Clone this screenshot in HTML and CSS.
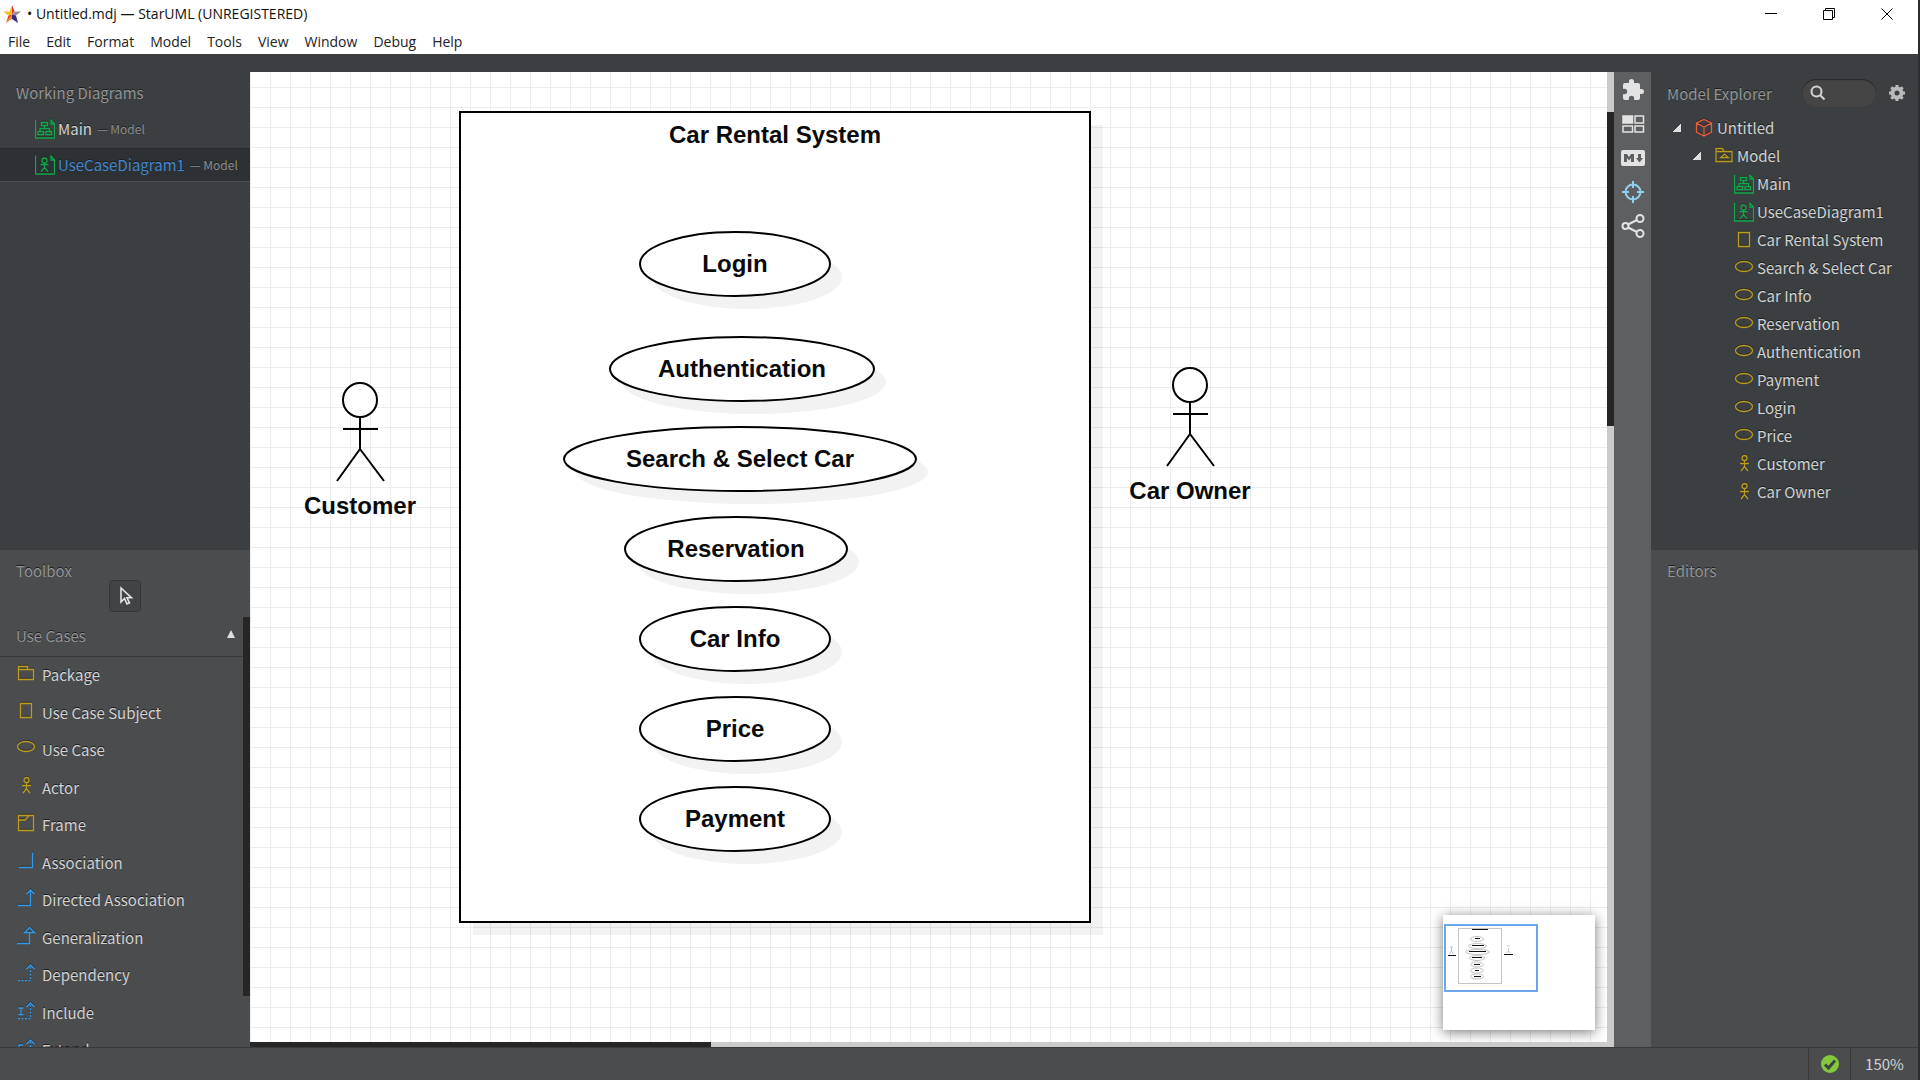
FILE: index.html
```html
<!DOCTYPE html>
<html lang="en">
<head>
<meta charset="utf-8">
<title>Untitled.mdj — StarUML</title>
<link rel="stylesheet" href="styles.css">
</head>
<body>
<svg class="defs" aria-hidden="true">
  <symbol id="i-class" viewBox="0 0 20 20"><path d="M.5.5v18.500h19V5M16 1v4h3.500zM6.500 3.500h6v3h-6zM9.500 6.500v3M5 13V9.500h9.500V13M3 12.500h5.500v3H3zM11 12.500h5.500v3H11z"/></symbol>
  <symbol id="i-usecase-diagram" viewBox="0 0 20 20"><path d="M.5.5v18.500h19V5M16 1v4h3.500zM9.500 8v4.500L6 16.500M9.500 12.500l3.500 4M5.500 9.500h8"/><circle cx="9.500" cy="5.500" r="2.500"/></symbol>
  <symbol id="i-cube" viewBox="0 0 20 20"><path d="M10 1.500l7.500 3.500v9L10 18l-7.500-4V5zM2.500 5L10 9l7.500-4M10 9v9"/></symbol>
  <symbol id="i-model" viewBox="0 0 20 20"><path d="M2 15.500V2.500h6.500l1.500 3h8v10zM2 5.500h8M6.500 11.500h8l-4-3.500z"/></symbol>
  <symbol id="i-package" viewBox="0 0 20 20"><path d="M2.500 16.500v-13h9v3h6v10zM2.500 6.500h9"/></symbol>
  <symbol id="i-rect" viewBox="0 0 20 20"><path d="M4.500 2.500h11v14h-11z"/></symbol>
  <symbol id="i-ellipse" viewBox="0 0 20 20"><ellipse cx="10" cy="8.500" rx="8.500" ry="5"/></symbol>
  <symbol id="i-actor" viewBox="0 0 20 20"><circle cx="10.500" cy="4" r="2.500"/><path d="M10.500 6.500v6L7 17M10.500 12.500L14 17M6 9.500h9"/></symbol>
  <symbol id="i-frame" viewBox="0 0 20 20"><path d="M2.500 2.500h15v15h-15zM2.500 7H9l4-4.500"/></symbol>
  <symbol id="i-assoc" viewBox="0 0 20 20"><path d="M3 16.500h13.500v-15"/></symbol>
  <symbol id="i-directed" viewBox="0 0 20 20"><path d="M2 17.500h12.500V2M10.500 6l4-4 4 4"/></symbol>
  <symbol id="i-general" viewBox="0 0 20 20"><path d="M1 17.500h12.500v-11M8.500 6.500h10l-5-5z"/></symbol>
  <symbol id="i-depend" viewBox="0 0 20 20"><path stroke-dasharray="2 1.500" d="M2 17.500h12.500V3"/><path d="M10.500 6l4-4 4 4"/></symbol>
  <symbol id="i-include" viewBox="0 0 20 20"><path stroke-dasharray="2 1.500" d="M2 17.500h12.500V3"/><path d="M10.500 6l4-4 4 4M2.500 7h5M2.500 13.500h5M5 7v6.500"/></symbol>
  <symbol id="i-extend" viewBox="0 0 20 20"><path stroke-dasharray="2 1.500" d="M2 17.500h12.500V3"/><path d="M10.500 6l4-4 4 4M7 7H3v6.500h4M3 10h3"/></symbol>
</svg>

<header class="titlebar">
  <svg class="logo" viewBox="0 0 18 18" aria-hidden="true">
    <path fill="#f6c21c" d="M9 0L6.500 6.500 0 6.500 5.500 10.500 9 9.500z"/>
    <path fill="#e23b2e" d="M9 0l2.500 6L9 9.500zM5.500 10.500L9 9.500 3 18z"/>
    <path fill="#9c8b93" d="M11.500 6.500H18l-5 4L9 9.500z"/>
    <path fill="#3b2a7c" d="M13 10.500L15 18l-6-4V9.500z"/>
    <path fill="#f08a1d" d="M3 18l6-4V9.500z"/>
  </svg>
  <h1 class="window-title">• Untitled.mdj — StarUML (UNREGISTERED)</h1>
  <div class="window-controls">
    <button type="button" aria-label="Minimize"><svg viewBox="0 0 12 12"><path d="M0 5.500h12"/></svg></button>
    <button type="button" aria-label="Restore"><svg viewBox="0 0 12 12"><path d="M.5 2.500h9v9h-9zM2.500 2.500V.5h9v9h-2"/></svg></button>
    <button type="button" aria-label="Close"><svg viewBox="0 0 12 12"><path d="M.5.5l11 11M11.500.5l-11 11"/></svg></button>
  </div>
</header>

<nav class="menubar">
  <button type="button">File</button><button type="button">Edit</button><button type="button">Format</button><button type="button">Model</button><button type="button">Tools</button><button type="button">View</button><button type="button">Window</button><button type="button">Debug</button><button type="button">Help</button>
</nav>

<div class="workspace">
  <aside class="sidebar left">
    <section class="panel upper">
      <h2 class="panel-title">Working Diagrams</h2>
      <ul class="diagrams">
        <li><svg class="icon green"><use href="#i-class"/></svg><span class="name">Main</span><span class="path">— Model</span></li>
        <li class="selected"><svg class="icon green"><use href="#i-usecase-diagram"/></svg><span class="name">UseCaseDiagram1</span><span class="path">— Model</span></li>
      </ul>
    </section>
    <section class="panel lower">
      <h2 class="panel-title">Toolbox</h2>
      <button type="button" class="select-tool" aria-label="Select"><svg viewBox="0 0 16 20"><path d="M4 2v14l3.500-3.500 2.500 5.500 2.500-1.200-2.500-5h4.500z"/></svg></button>
      <div class="tool-scroll">
        <div class="tool-group">
          <h3 class="group-title">Use Cases <span class="fold"></span></h3>
          <ul class="tools">
            <li><button type="button"><svg class="icon gold"><use href="#i-package"/></svg>Package</button></li>
            <li><button type="button"><svg class="icon gold"><use href="#i-rect"/></svg>Use Case Subject</button></li>
            <li><button type="button"><svg class="icon gold"><use href="#i-ellipse"/></svg>Use Case</button></li>
            <li><button type="button"><svg class="icon gold"><use href="#i-actor"/></svg>Actor</button></li>
            <li><button type="button"><svg class="icon gold"><use href="#i-frame"/></svg>Frame</button></li>
            <li><button type="button"><svg class="icon blue"><use href="#i-assoc"/></svg>Association</button></li>
            <li><button type="button"><svg class="icon blue"><use href="#i-directed"/></svg>Directed Association</button></li>
            <li><button type="button"><svg class="icon blue"><use href="#i-general"/></svg>Generalization</button></li>
            <li><button type="button"><svg class="icon blue"><use href="#i-depend"/></svg>Dependency</button></li>
            <li><button type="button"><svg class="icon blue"><use href="#i-include"/></svg>Include</button></li>
            <li><button type="button"><svg class="icon blue"><use href="#i-extend"/></svg>Extend</button></li>
          </ul>
        </div>
        <div class="track"><div class="thumb tools-thumb"></div></div>
      </div>
    </section>
  </aside>

  <main class="editor">
    <div class="canvas">
      <svg class="diagram" role="img" aria-label="Car rental use case diagram">
        <defs>
          <pattern id="grid" width="20" height="20" y="15" patternUnits="userSpaceOnUse"><path class="gridline" d="M.5 0v20M0 .5h20"/></pattern>
        </defs>
        <rect width="100%" height="100%" fill="url(#grid)"/>
        <rect class="shadow" x="223" y="53" width="630" height="810"/>
        <rect class="shape" x="210" y="40" width="630" height="810"/>
        <g class="shadow">
          <ellipse cx="497" cy="205" rx="95" ry="32"/><ellipse cx="504" cy="310" rx="132" ry="32"/><ellipse cx="502" cy="400" rx="176" ry="32"/><ellipse cx="498" cy="490" rx="111" ry="32"/><ellipse cx="497" cy="580" rx="95" ry="32"/><ellipse cx="497" cy="670" rx="95" ry="32"/><ellipse cx="497" cy="760" rx="95" ry="32"/>
        </g>
        <g class="shape">
          <ellipse cx="485" cy="192" rx="95" ry="32"/><ellipse cx="492" cy="297" rx="132" ry="32"/><ellipse cx="490" cy="387" rx="176" ry="32"/><ellipse cx="486" cy="477" rx="111" ry="32"/><ellipse cx="485" cy="567" rx="95" ry="32"/><ellipse cx="485" cy="657" rx="95" ry="32"/><ellipse cx="485" cy="747" rx="95" ry="32"/>
          <g id="person"><circle cx="110" cy="328" r="17"/><path fill="none" d="M110 345v32L87 409M110 377l24 32M93 357h35"/></g>
          <use href="#person" x="830" y="-15"/>
        </g>
        <g class="label">
          <text x="525" y="71">Car Rental System</text>
          <text x="485" y="200">Login</text><text x="492" y="305">Authentication</text><text x="490" y="395">Search &amp; Select Car</text><text x="486" y="485">Reservation</text><text x="485" y="575">Car Info</text><text x="485" y="665">Price</text><text x="485" y="755">Payment</text>
          <text x="110" y="442">Customer</text><text x="940" y="427">Car Owner</text>
        </g>
      </svg>
      <div class="minimap">
        <svg viewBox="0 0 152 115" aria-hidden="true">
          <rect x="2" y="10" width="92" height="66" fill="none" stroke="#6aa5ee" stroke-width="2"/>
          <g fill="none" stroke="#c4c4c4">
            <rect x="15.500" y="13.500" width="43" height="55"/>
            <ellipse cx="34" cy="24" rx="6.500" ry="2.500"/><ellipse cx="34.500" cy="31" rx="9" ry="2.500"/><ellipse cx="34.500" cy="37" rx="12" ry="2.500"/><ellipse cx="34" cy="43" rx="7.500" ry="2.500"/><ellipse cx="34" cy="49.500" rx="6.500" ry="2.500"/><ellipse cx="34" cy="55.500" rx="6.500" ry="2.500"/><ellipse cx="34" cy="61.500" rx="6.500" ry="2.500"/>
            <path d="M7 32l3 0M8.500 32v4l-2 3M8.500 36l2 3M64 31h3M65.500 33v3l-2 2M65.500 36l2 2"/>
          </g>
          <path fill="none" stroke="#111" d="M29 14.500h16M32 23.500h5M29 30.500h12M26 36.500h17M29 42.500h10M31 49.500h6M32 55.500h4M31 61.500h7M5 40.500h8M61 39.500h9"/>
        </svg>
      </div>
    </div>
    <div class="vtrack"><div class="thumb v-thumb"></div></div>
    <div class="htrack"><div class="thumb h-thumb"></div></div>
  </main>

  <nav class="rail">
    <button type="button" aria-label="Extensions"><svg viewBox="0 0 24 24" fill="#e3e3e3"><path d="M20.500 11H19V7a2 2 0 0 0-2-2h-4V3.500a2.500 2.500 0 0 0-5 0V5H4a2 2 0 0 0-2 2v3.800h1.500a2.700 2.700 0 0 1 0 5.400H2V20a2 2 0 0 0 2 2h3.800v-1.500a2.700 2.700 0 0 1 5.400 0V22H17a2 2 0 0 0 2-2v-4h1.500a2.500 2.500 0 0 0 0-5z"/></svg></button>
    <button type="button" aria-label="Thumbnails"><svg viewBox="0 0 24 24" fill="none" stroke="#e3e3e3" stroke-width="1.500"><path fill="#e3e3e3" d="M2 4h9.500v7H2z"/><path d="M14 4h8.500v7H14zM2 14h9.500v6H2zM14 14h8.500v6H14z"/></svg></button>
    <button type="button" aria-label="Markdown"><svg viewBox="0 0 24 24"><rect y="4" width="24" height="16" rx="2" fill="#e3e3e3"/><path fill="#5e5f61" d="M3 16V8h3l2 3 2-3h3v8h-3v-4l-2 2.500L6 12v4zM17 8h3v4h2l-3.500 4.500L15 12h2z"/></svg></button>
    <button type="button" aria-label="Locate"><svg viewBox="0 0 24 24" fill="none" stroke="#8fd0ee" stroke-width="2"><circle cx="12" cy="12" r="7.500"/><path d="M12 1v7M12 16v7M1 12h7M16 12h7"/></svg></button>
    <button type="button" aria-label="Share"><svg viewBox="0 0 24 24" fill="none" stroke="#e3e3e3" stroke-width="2"><circle cx="4.500" cy="12" r="3"/><circle cx="19" cy="4.500" r="3.500"/><circle cx="19" cy="19.500" r="3.500"/><path d="M7 10.500l9-4.500M7 13.500l9 4.500"/></svg></button>
  </nav>

  <aside class="sidebar right">
    <section class="panel upper">
      <div class="explorer-head">
        <h2 class="panel-title">Model Explorer</h2>
        <label class="search"><svg viewBox="0 0 16 16" aria-hidden="true"><circle cx="6.500" cy="6.500" r="5"/><path d="M10 10l4.500 4.500"/></svg><input type="text" aria-label="Search model"></label>
        <button type="button" class="gear" aria-label="Settings"><svg viewBox="0 0 16 16"><circle cx="8" cy="8" r="4.500" stroke-width="4" stroke="#b9babb" fill="none"/><path stroke="#b9babb" stroke-width="3" d="M8 0v3M8 13v3M0 8h3M13 8h3M2.300 2.300l2.200 2.200M11.500 11.500l2.200 2.200M13.700 2.300l-2.200 2.200M4.500 11.500l-2.200 2.200"/></svg></button>
      </div>
      <ul class="tree">
        <li><span class="arrow"></span><svg class="icon red"><use href="#i-cube"/></svg>Untitled</li>
        <li class="level1"><span class="arrow"></span><svg class="icon gold"><use href="#i-model"/></svg>Model</li>
        <li class="level2"><svg class="icon green"><use href="#i-class"/></svg>Main</li>
        <li class="level2"><svg class="icon green"><use href="#i-usecase-diagram"/></svg>UseCaseDiagram1</li>
        <li class="level2"><svg class="icon gold"><use href="#i-rect"/></svg>Car Rental System</li>
        <li class="level2"><svg class="icon gold"><use href="#i-ellipse"/></svg>Search &amp; Select Car</li>
        <li class="level2"><svg class="icon gold"><use href="#i-ellipse"/></svg>Car Info</li>
        <li class="level2"><svg class="icon gold"><use href="#i-ellipse"/></svg>Reservation</li>
        <li class="level2"><svg class="icon gold"><use href="#i-ellipse"/></svg>Authentication</li>
        <li class="level2"><svg class="icon gold"><use href="#i-ellipse"/></svg>Payment</li>
        <li class="level2"><svg class="icon gold"><use href="#i-ellipse"/></svg>Login</li>
        <li class="level2"><svg class="icon gold"><use href="#i-ellipse"/></svg>Price</li>
        <li class="level2"><svg class="icon gold"><use href="#i-actor"/></svg>Customer</li>
        <li class="level2"><svg class="icon gold"><use href="#i-actor"/></svg>Car Owner</li>
      </ul>
    </section>
    <section class="panel lower">
      <h2 class="panel-title">Editors</h2>
    </section>
  </aside>
</div>

<footer class="statusbar">
  <div class="status valid"><svg viewBox="0 0 18 18" role="img" aria-label="Valid"><circle cx="9" cy="9" r="9" fill="#84c93c"/><path fill="none" stroke="#3f4441" stroke-width="3" d="M4 9.500l3.500 3.500L14 5.500"/></svg></div>
  <div class="status zoom">150%</div>
</footer>
</body>
</html>
```
FILE: styles.css
```css
* { box-sizing: border-box; }

body {
  margin: 0;
  height: 100vh;
  border-right: 2px solid #2b2d2f;
  display: grid;
  grid-template-rows: 30px 24px minmax(0, 1fr) 33px;
  background: #3b3f41;
  color: #d2d3d3;
  font: 15px/20px "Noto Sans CJK SC", "Noto Sans", sans-serif;
  overflow: hidden;
}

h1, h2, h3, ul { margin: 0; padding: 0; font-size: inherit; font-weight: 400; list-style: none; }
button { border: 0; padding: 0; background: none; color: inherit; font: inherit; text-shadow: inherit; }
.defs { position: absolute; width: 0; height: 0; }

/* Title bar and menu */
.titlebar { display: flex; align-items: center; background: #fff; color: #111; padding: 0 2px 2px 3px; }
.logo { width: 18px; height: 18px; }
.window-title { margin-left: 6px; font: 14px/20px "Open Sans", sans-serif; }
.window-controls { margin-left: auto; display: flex; }
.window-controls button { width: 58px; height: 28px; display: grid; place-items: center; }
.window-controls svg { width: 12px; height: 12px; fill: none; stroke: #000; }
.menubar { display: flex; gap: 16px; align-items: center; padding: 0 8px; background: #fff; color: #222; font: 14px/20px "Open Sans", sans-serif; }

/* Workspace */
.workspace { display: grid; grid-template-columns: 250px minmax(0, 1fr) 37px 267px; padding-top: 18px; min-height: 0; }
.sidebar { display: grid; grid-template-rows: minmax(0, 49fr) minmax(0, 51fr); text-shadow: 0 -1px 0 #1c1e1f; min-height: 0; }
.lower { background: #4b4c4e; overflow: hidden; }
.panel-title { height: 41px; padding: 11px 16px 10px; line-height: 20px; color: #929495; }
.icon { width: 20px; height: 20px; flex: none; fill: none; stroke-width: 1.3; filter: drop-shadow(0 -1px 0 #22221c99); }
.green { stroke: #0fa84a; }
.gold { stroke: #bd9c1c; }
.blue { stroke: #3399ea; }
.red { stroke: #ee5c3e; }

.diagrams { display: grid; gap: 4px; }
.diagrams li { height: 32px; display: flex; align-items: center; padding-left: 35px; white-space: nowrap; }
.diagrams .name { margin-left: 3px; }
.diagrams .path { margin-left: 5px; font-size: 12px; color: #8d8f90; }
.diagrams .selected { background: #2e3133; box-shadow: 0 1px 0 #4a4e50, 0 -1px 0 #282a2c; }
.selected .name { color: #4187cf; }

.left .lower { display: flex; flex-direction: column; }
.left .lower .panel-title { height: 30px; padding-bottom: 0; }
.select-tool { align-self: center; flex: none; width: 32px; height: 32px; border: 1px solid #363738; border-radius: 4px; background: #424345; display: grid; place-items: center; }
.select-tool svg { width: 16px; height: 20px; fill: none; stroke: #e3e3e3; stroke-width: 1.6; }
.tool-scroll { flex: 1; min-height: 0; margin-top: 5px; display: grid; grid-template-columns: 1fr 7px; overflow: hidden; }
.tool-group { min-width: 0; }
.group-title { height: 40px; padding: 10px 8px 10px 16px; border-bottom: 1px solid #38393a; color: #929495; display: flex; align-items: center; justify-content: space-between; }
.fold { border: 4px solid transparent; border-top: 0; border-bottom: 8px solid #dedede; margin-bottom: 4px; }
.tools li { height: 37px; }
.tools li:nth-child(even) { height: 38px; }
.tools button { width: 100%; height: 100%; padding-left: 16px; display: flex; align-items: center; gap: 6px; text-align: left; }
.tools .icon { margin-bottom: 4px; }
.thumb { background: #262626; }
.tools-thumb { height: 379px; }

/* Editor */
.editor { display: grid; grid-template: minmax(0, 1fr) 5px / minmax(0, 1fr) 7px; min-height: 0; }
.canvas { position: relative; background: #fff; overflow: hidden; }
.diagram { display: block; width: 100%; height: 100%; }
.gridline { stroke: #ececec; fill: none; }
.shape { fill: #fff; stroke: #000; stroke-width: 2; }
.shadow { fill: #000; fill-opacity: .05; }
.label { font: bold 24px "Liberation Sans", Arial, sans-serif; text-anchor: middle; fill: #0a0a0a; }
.vtrack { grid-row: 1 / 3; grid-column: 2; background: #cbcbcb; padding-top: 40px; }
.htrack { grid-row: 2; grid-column: 1; background: #cbcbcb; }
.v-thumb { height: 314px; }
.h-thumb { width: 34%; height: 5px; }
.minimap { position: absolute; right: 12px; bottom: 12px; width: 152px; height: 115px; background: #fff; box-shadow: 0 2px 12px #0008; }
.minimap svg { display: block; width: 100%; height: 100%; }

.rail { background: #5e5f61; padding-top: 1px; }
.rail button { width: 100%; height: 34px; display: grid; place-items: center; }
.rail svg { width: 24px; height: 24px; }

/* Model explorer */
.explorer-head { height: 42px; display: flex; align-items: center; }
.explorer-head .panel-title { flex: 1; padding-right: 0; white-space: nowrap; }
.search { flex: none; width: 74px; height: 28px; border-radius: 14px; background: #454545; box-shadow: inset 0 1px 1px #232526; display: flex; align-items: center; padding-left: 8px; }
.search svg { width: 16px; height: 16px; flex: none; fill: none; stroke: #d4d5d5; stroke-width: 2; }
.search input { flex: 1; min-width: 0; border: 0; background: none; color: inherit; font: inherit; outline: 0; }
.gear { width: 42px; height: 28px; display: grid; place-items: center; }
.gear svg { width: 16px; height: 16px; }
.tree li { height: 28px; display: flex; align-items: center; padding-left: 22px; white-space: nowrap; }
.tree .icon { margin-right: 3px; }
.tree .level1 { padding-left: 42px; }
.tree .level2 { padding-left: 83px; }
.arrow { width: 8px; height: 8px; margin-right: 13px; background: linear-gradient(135deg, transparent 50%, #dedede 50%); }

/* Status bar */
.statusbar { display: flex; justify-content: flex-end; background: #4b4c4e; border-top: 1px solid #38393a; }
.status { border-left: 1px solid #38393a; display: grid; place-items: center; }
.valid { width: 42px; }
.valid svg { width: 18px; height: 18px; }
.zoom { width: 68px; }
```
